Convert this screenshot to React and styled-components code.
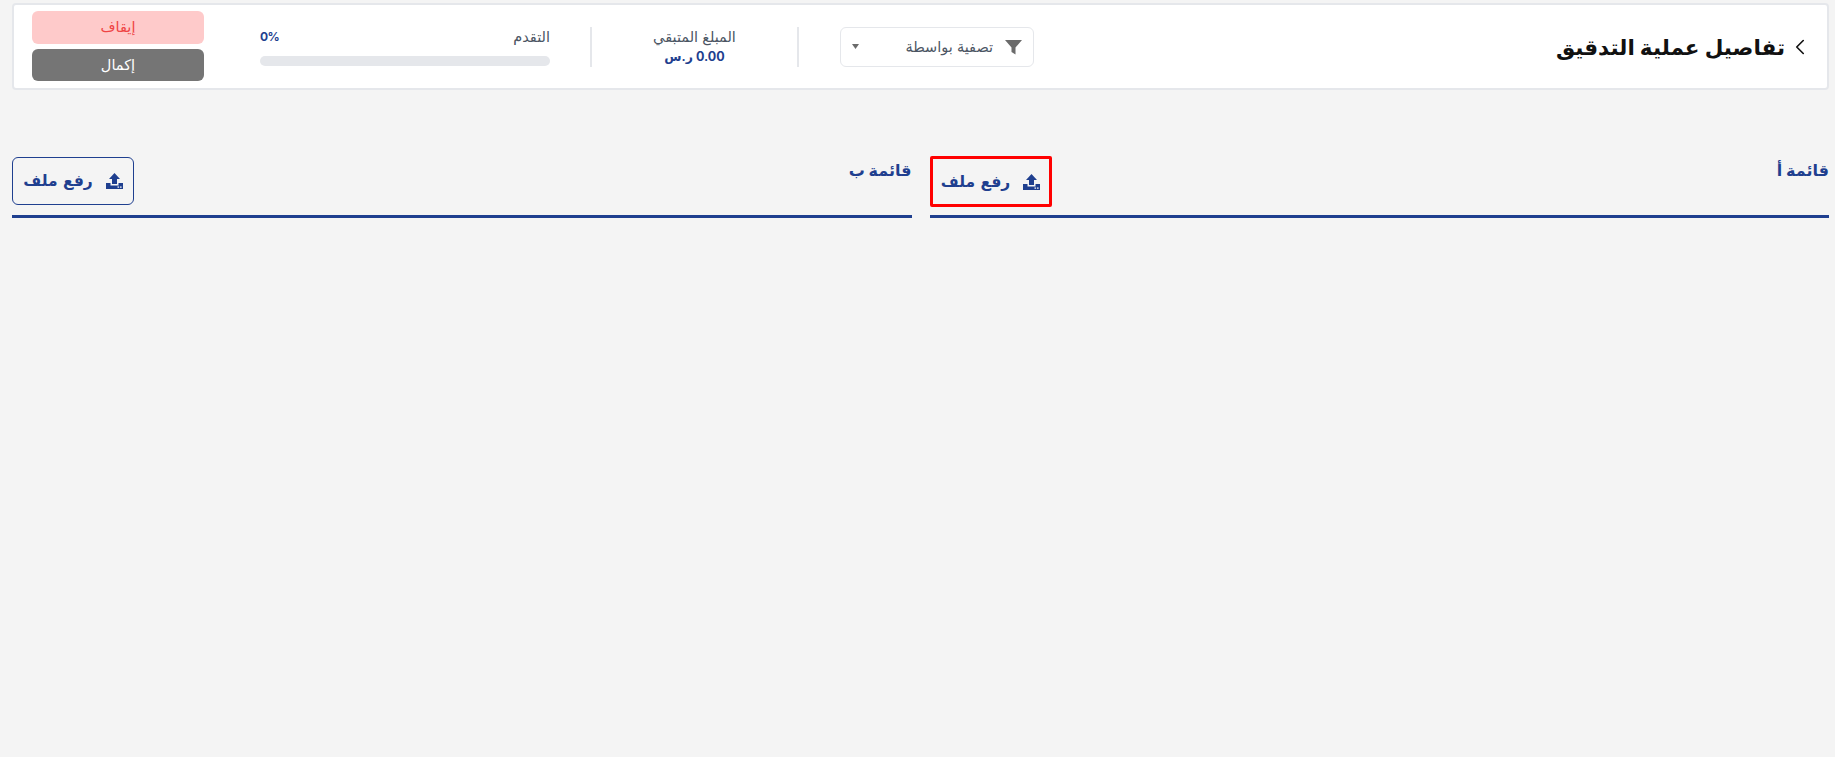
import React from "react";
import styled, { createGlobalStyle } from "styled-components";
import { ChevronLeft } from "lucide-react";

const GlobalStyle = createGlobalStyle`
  html, body {
    margin: 0;
    min-height: 100vh;
    background: #f4f4f4;
    font-family: Inter, "DejaVu Sans", sans-serif;
  }
  * { box-sizing: border-box; }
`;

const FilterIcon = () => (
  <svg width="17" height="16" viewBox="0 0 17 16">
    <path d="M0 1h17L10.5 8.5V15.5L6.5 13V8.5z" fill="#6b6b6b" />
  </svg>
);

const CaretIcon = () => (
  <svg width="7" height="5" viewBox="0 0 7 5">
    <path d="M0 0h7L3.5 5z" fill="#6b6b6b" />
  </svg>
);

const UploadIcon = () => (
  <svg width="17" height="16" viewBox="0 0 17 16">
    <path d="M8.5 0L14 6H11V11H6V6H3z" fill="#1f3f8f" />
    <path d="M0 10H4.5V12.5H12.5V10H17V16H0z" fill="#1f3f8f" />
    <rect x="11.5" y="13.5" width="1.6" height="1.2" fill="#fff" />
    <rect x="14" y="13.5" width="1.6" height="1.2" fill="#fff" />
  </svg>
);

const UploadButton = ({ highlighted }) => (
  <Upload $highlighted={highlighted}>
    <UploadIcon />
    رفع ملف
  </Upload>
);

export default function App() {
  return (
    <Page dir="rtl">
      <GlobalStyle />
      <Header>
        <TitleBlock>
          <ChevronLeft size={26} strokeWidth={1.5} color="#111" />
          <Title>تفاصيل عملية التدقيق</Title>
        </TitleBlock>
        <Tools>
          <FilterBox>
            <FilterLabel>
              <FilterIcon />
              تصفية بواسطة
            </FilterLabel>
            <CaretIcon />
          </FilterBox>
          <Stat>
            <StatLabel>المبلغ المتبقي</StatLabel>
            <StatValue>0.00 ر.س</StatValue>
          </Stat>
          <Progress>
            <ProgressHead>
              <StatLabel>التقدم</StatLabel>
              <Percent>0%</Percent>
            </ProgressHead>
            <Track />
          </Progress>
          <Actions>
            <StopButton>إيقاف</StopButton>
            <DoneButton>إكمال</DoneButton>
          </Actions>
        </Tools>
      </Header>
      <Lists>
        <ListColumn>
          <ListHead>
            <ListTitle>قائمة أ</ListTitle>
            <UploadButton highlighted />
          </ListHead>
        </ListColumn>
        <ListColumn>
          <ListHead>
            <ListTitle>قائمة ب</ListTitle>
            <UploadButton />
          </ListHead>
        </ListColumn>
      </Lists>
    </Page>
  );
}

const Page = styled.div`
  padding: 3px 6px 0 12px;
`;

const Header = styled.header`
  height: 87px;
  display: flex;
  align-items: center;
  justify-content: space-between;
  background: #fff;
  border: 2px solid #e5e7eb;
  border-radius: 4px;
  padding: 0 14px 0 18px;
`;

const TitleBlock = styled.div`
  display: flex;
  align-items: center;
  gap: 2px;
`;

const Title = styled.h1`
  margin: 0;
  font-size: 21.5px;
  font-weight: 700;
  color: #111;
`;

const Tools = styled.div`
  display: flex;
  align-items: center;
`;

const FilterBox = styled.div`
  width: 194px;
  height: 40px;
  display: flex;
  align-items: center;
  justify-content: space-between;
  padding: 0 11px;
  border: 1px solid #e5e7eb;
  border-radius: 6px;
`;

const FilterLabel = styled.div`
  display: flex;
  align-items: center;
  gap: 12px;
  font-size: 14.5px;
  color: #4b5563;
`;

const Stat = styled.div`
  width: 209px;
  height: 40px;
  margin-right: 41px;
  border-right: 2px solid #e5e7eb;
  border-left: 2px solid #e5e7eb;
  display: flex;
  flex-direction: column;
  align-items: center;
  justify-content: center;
  gap: 2px;
`;

const StatLabel = styled.div`
  font-size: 14.5px;
  line-height: 18px;
  color: #4b5563;
`;

const StatValue = styled.div`
  font-size: 12.5px;
  line-height: 18px;
  font-weight: 700;
  color: #1f3f8f;
`;

const Progress = styled.div`
  width: 330px;
  padding: 0 40px 0 0;
`;

const ProgressHead = styled.div`
  display: flex;
  justify-content: space-between;
  align-items: center;
  margin-bottom: 10px;
`;

const Percent = styled.div`
  font-size: 12px;
  font-weight: 700;
  letter-spacing: -0.5px;
  color: #1f3f8f;
`;

const Track = styled.div`
  height: 10px;
  border-radius: 5px;
  background: #e5e7eb;
`;

const Actions = styled.div`
  width: 172px;
  display: flex;
  flex-direction: column;
  gap: 5px;
  margin: 0 56px 2px 0;
`;

const StopButton = styled.button`
  height: 33px;
  border: 0;
  border-radius: 6px;
  background: #fecaca;
  color: #ef4444;
  font: 400 14.5px "DejaVu Sans", sans-serif;
`;

const DoneButton = styled.button`
  height: 32px;
  border: 0;
  border-radius: 6px;
  background: #757575;
  color: #fff;
  font: 400 14.5px "DejaVu Sans", sans-serif;
`;

const Lists = styled.div`
  display: flex;
  gap: 18px;
  margin-top: 67px;
`;

const ListColumn = styled.section`
  flex: 1;
`;

const ListHead = styled.div`
  height: 61px;
  display: flex;
  align-items: flex-start;
  justify-content: space-between;
  border-bottom: 3px solid #1f3f8f;
`;

const ListTitle = styled.h2`
  margin: 0;
  padding-top: 3px;
  font-size: 16px;
  font-weight: 700;
  color: #1f3f8f;
`;

const Upload = styled.button`
  width: 122px;
  height: ${(p) => (p.$highlighted ? "51px" : "48px")};
  margin-top: ${(p) => (p.$highlighted ? "-1px" : "0")};
  display: flex;
  align-items: center;
  justify-content: center;
  gap: 13px;
  padding: 0;
  background: transparent;
  border: ${(p) => (p.$highlighted ? "3px solid #f00" : "1px solid #1f3f8f")};
  border-radius: ${(p) => (p.$highlighted ? "2px" : "6px")};
  color: #1f3f8f;
  font: 700 15.5px "DejaVu Sans", sans-serif;
`;
